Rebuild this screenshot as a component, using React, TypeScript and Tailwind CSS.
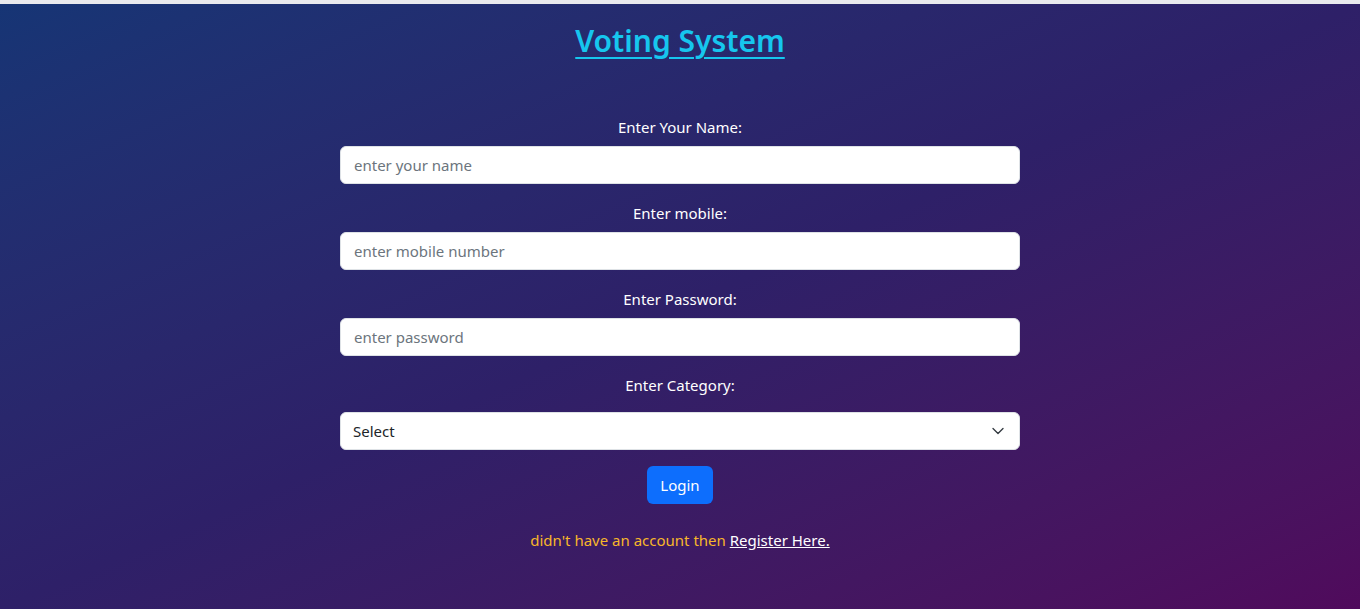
import { ChevronDown } from "lucide-react";

const font = { fontFamily: '"Segoe UI", "Noto Sans", "Open Sans", sans-serif' };

const Field = ({ label, placeholder }: { label: string; placeholder: string }) => (
  <div className="flex flex-col items-center">
    <label className="text-[15px] leading-6 text-white mb-[7px]">{label}</label>
    <input
      className="w-full h-[38px] rounded-md border border-[#dee2e6] bg-white px-[13px] text-[15px] text-[#212529] placeholder:text-[#6c757d] outline-none"
      placeholder={placeholder}
    />
  </div>
);

export default function App() {
  return (
    <div className="min-h-screen flex flex-col bg-white" style={font}>
      <div className="h-[4px] bg-[#e9eaee]" />
      <div className="flex-1 min-h-[605px] bg-gradient-to-br from-[#163575] via-[#2e2068] to-[#500a5c] pt-[18px]">
        <h1 className="text-center text-[30px] leading-[38px] font-semibold text-[#16c6ee] underline underline-offset-[5px] decoration-[2px]">
          Voting System
        </h1>
        <form className="w-[680px] mx-auto mt-[55px] flex flex-col gap-[17px]">
          <Field label="Enter Your Name:" placeholder="enter your name" />
          <Field label="Enter mobile:" placeholder="enter mobile number" />
          <Field label="Enter Password:" placeholder="enter password" />
          <div className="flex flex-col items-center">
            <label className="text-[15px] leading-6 text-white mb-[15px]">Enter Category:</label>
            <div className="relative w-full">
              <select className="w-full h-[38px] appearance-none rounded-md border border-[#dee2e6] bg-white px-[12px] text-[15px] text-[#212529] outline-none">
                <option>Select</option>
                <option>Voter</option>
                <option>Admin</option>
              </select>
              <ChevronDown className="absolute right-[12px] top-[9px] w-[20px] h-[20px] text-[#343a40] pointer-events-none" strokeWidth={1.6} />
            </div>
          </div>
          <div className="flex justify-center -mt-[1px]">
            <button type="button" className="h-[38px] w-[66px] rounded-md bg-[#0d6efd] text-white text-[15px]">
              Login
            </button>
          </div>
          <p className="text-center text-[15px] leading-6 text-[#f7b72a] mt-[7px]">
            didn't have an account then{" "}
            <a href="#" className="text-white underline">
              Register Here.
            </a>
          </p>
        </form>
      </div>
    </div>
  );
}
